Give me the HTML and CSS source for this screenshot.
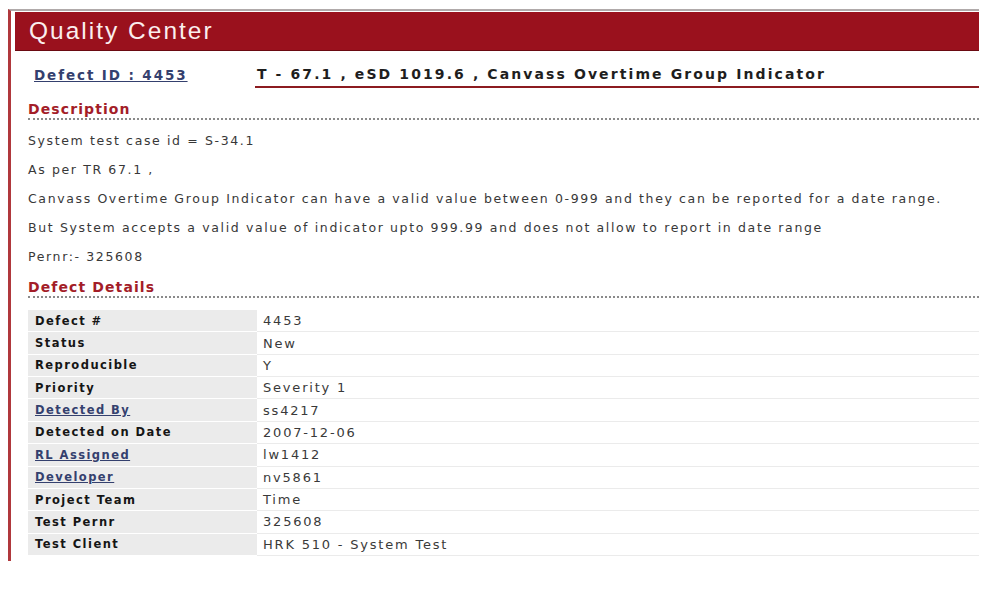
FILE: index.html
```html
<!DOCTYPE html>
<html>
<head>
<meta charset="utf-8">
<title>Quality Center</title>
<link rel="stylesheet" href="styles.css">
</head>
<body>
<div class="frame">
  <div class="banner">Quality Center</div>
  <div class="idrow">
    <a class="defect-id" href="#">Defect ID : 4453</a>
    <span class="title">T - 67.1 , eSD 1019.6 , Canvass Overtime Group Indicator</span>
  </div>
  <div class="content">
    <h2 class="section">Description</h2>
    <p class="desc">System test case id = S-34.1</p>
    <p class="desc">As per TR 67.1 ,</p>
    <p class="desc">Canvass Overtime Group Indicator can have a valid value between 0-999 and they can be reported for a date range.</p>
    <p class="desc">But System accepts a valid value of indicator upto 999.99 and does not allow to report in date range</p>
    <p class="desc">Pernr:- 325608</p>
    <h2 class="section details-head">Defect Details</h2>
    <table class="details">
      <tr><td class="label">Defect #</td><td class="value">4453</td></tr>
      <tr><td class="label">Status</td><td class="value">New</td></tr>
      <tr><td class="label">Reproducible</td><td class="value">Y</td></tr>
      <tr><td class="label">Priority</td><td class="value">Severity 1</td></tr>
      <tr><td class="label"><a class="label-link" href="#">Detected By</a></td><td class="value">ss4217</td></tr>
      <tr><td class="label">Detected on Date</td><td class="value">2007-12-06</td></tr>
      <tr><td class="label"><a class="label-link" href="#">RL Assigned</a></td><td class="value">lw1412</td></tr>
      <tr><td class="label"><a class="label-link" href="#">Developer</a></td><td class="value">nv5861</td></tr>
      <tr><td class="label">Project Team</td><td class="value">Time</td></tr>
      <tr><td class="label">Test Pernr</td><td class="value">325608</td></tr>
      <tr><td class="label">Test Client</td><td class="value">HRK 510 - System Test</td></tr>
    </table>
  </div>
</div>
</body>
</html>
```
FILE: styles.css
```css
html, body {
  margin: 0;
  padding: 0;
  background: #ffffff;
}
body {
  font-family: "DejaVu Sans", Verdana, sans-serif;
  color: #3a3a3a;
}
.frame {
  margin: 9px 2px 0 8px;
  border-top: 2px solid #b0aaaa;
  border-left: 3px solid #b0383c;
  padding: 1px 0 5px 4px;
}
.banner {
  height: 39px;
  box-sizing: border-box;
  background: #9a111d;
  border-bottom: 1px solid #6a0a12;
  color: #fbeeee;
  font-family: "Liberation Sans", Arial, sans-serif;
  font-size: 24.5px;
  letter-spacing: 2px;
  line-height: 38px;
  padding-left: 14px;
}
.idrow {
  display: flex;
  align-items: flex-end;
  height: 37px;
  padding-left: 19px;
}
.defect-id {
  flex: 0 0 221px;
  font-size: 13.5px;
  font-weight: bold;
  letter-spacing: 1.9px;
  color: #34406e;
  text-decoration: underline;
  line-height: 16px;
  padding-bottom: 5px;
}
.title {
  flex: 1;
  font-size: 14px;
  font-weight: bold;
  letter-spacing: 2.1px;
  color: #1e1e1e;
  line-height: 16px;
  padding: 0 0 4px 2px;
  border-bottom: 2px solid #8c1b20;
}
.content {
  padding-left: 13px;
}
.section {
  margin: 13px 0 0 0;
  font-size: 14px;
  font-weight: bold;
  letter-spacing: 1.1px;
  color: #a31d28;
  line-height: 16px;
  padding-bottom: 1px;
  border-bottom: 2px dotted #8a8a8a;
}
.details-head {
  margin-top: 14px;
}
.desc {
  margin: 13px 0 0 0;
  font-size: 12.5px;
  line-height: 16px;
  letter-spacing: 1.63px;
  color: #383838;
}
.details {
  width: 100%;
  margin-top: 12px;
  border-collapse: separate;
  border-spacing: 0;
}
.details td {
  height: 21.36px;
  padding: 0;
  border-bottom: 1px solid #ebebeb;
  vertical-align: middle;
}
.label {
  width: 229px;
  background: #ebebeb;
  border-bottom-color: #ffffff !important;
  padding-left: 7px !important;
  box-sizing: border-box;
  font-size: 11.5px;
  font-weight: bold;
  letter-spacing: 1.45px;
  color: #151515;
}
.label-link {
  color: #34406e;
  text-decoration: underline;
}
.value {
  padding-left: 6px !important;
  font-size: 13px;
  letter-spacing: 1.8px;
  color: #3a3a3a;
}
```
